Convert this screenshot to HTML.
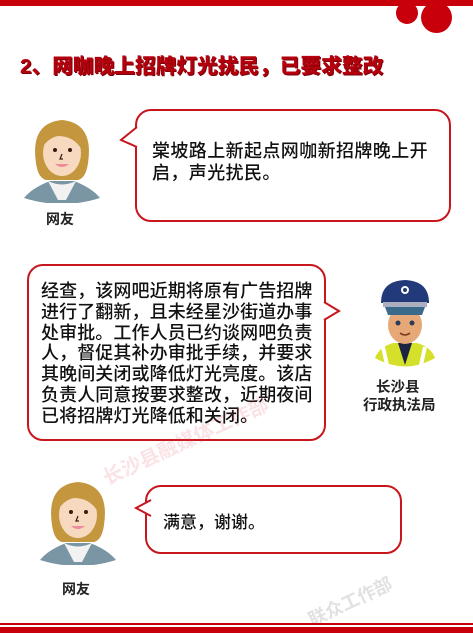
<!DOCTYPE html>
<html><head><meta charset="utf-8"><style>
*{margin:0;padding:0;box-sizing:border-box}
body{width:473px;height:633px;background:#fff;position:relative;overflow:hidden;font-family:"Liberation Sans","Noto Sans CJK SC",sans-serif;color:#111}
.a{position:absolute}
.bub{position:absolute;border:2px solid #c8161d;border-radius:16px;background:#fff}
.t{position:absolute;font-size:18px;white-space:nowrap;font-weight:500}
.lab{position:absolute;font-size:14px;font-weight:bold;color:#222;white-space:nowrap;text-align:center}
</style></head><body>
<div class="a" style="left:0;top:0;width:473px;height:6px;background:#c8000b"></div>
<div class="a" style="left:396px;top:2px;width:22px;height:22px;border-radius:50%;background:#c8000b"></div>
<div class="a" style="left:421px;top:2px;width:31px;height:31px;border-radius:50%;background:#c8000b"></div>
<div class="a" style="left:20px;top:49px;font-size:20.7px;font-weight:900;color:#b3000c;white-space:nowrap;text-shadow:1px 1px 0 #7a0008">2、网咖晚上招牌灯光扰民，已要求整改</div>

<!-- woman 1 -->
<svg class="a" style="left:22px;top:108px" width="80" height="95" viewBox="0 0 80 95">
<path d="M14 55 Q8 15 40 12 Q72 15 66 55 Q64 70 56 72 L24 72 Q16 70 14 55Z" fill="#c4963e"/>
<ellipse cx="40" cy="45" rx="19" ry="23" fill="#f6d9be"/>
<path d="M20 40 Q22 18 44 20 Q58 22 60 42 Q52 28 36 28 Q26 30 20 40Z" fill="#c4963e"/>
<circle cx="33" cy="42" r="2" fill="#3a1a10"/><circle cx="48" cy="42" r="2" fill="#3a1a10"/>
<path d="M40 46 L38 51 L41 51" stroke="#3a1a10" stroke-width="1.2" fill="none"/>
<path d="M33 56 Q40 62 47 56 Z" fill="#f08a9a"/>
<path d="M2 90 Q10 80 28 73 L52 73 Q70 80 78 90 Q40 102 2 90Z" fill="#7a96a4"/>
<path d="M26 73 L36 92 L44 92 L54 73 Q40 80 26 73Z" fill="#f2f2f2"/>
</svg>
<div class="lab" style="left:46px;top:209px">网友</div>

<div class="bub" style="left:135px;top:109px;width:316px;height:113px"></div>
<svg class="a" style="left:119px;top:125px" width="20" height="30"><path d="M18 2 L2 15 L18 22" fill="#fff" stroke="#c8161d" stroke-width="2"/></svg>
<div class="t" style="left:152px;top:140px;line-height:22px;letter-spacing:0.4px"> 棠坡路上新起点网咖新招牌晚上开<br>启，声光扰民。</div>

<!-- bubble 2 -->
<div class="bub" style="left:27px;top:264px;width:299px;height:177px"></div>
<svg class="a" style="left:322px;top:300px" width="20" height="30"><path d="M2 2 L17 11 L2 20" fill="#fff" stroke="#c8161d" stroke-width="2"/></svg>
<div class="t" style="left:41px;top:281px;line-height:20.8px;letter-spacing:0.1px">经查，该网吧近期将原有广告招牌<br>进行了翻新，且未经星沙街道办事<br>处审批。工作人员已约谈网吧负责<br>人，督促其补办审批手续，并要求<br>其晚间关闭或降低灯光亮度。该店<br>负责人同意按要求整改，近期夜间<br>已将招牌灯光降低和关闭。</div>

<!-- police -->
<svg class="a" style="left:365px;top:275px" width="80" height="95" viewBox="0 0 80 95">
<path d="M10 83 Q14 72 28 68 L52 68 Q66 72 70 83 Q40 100 10 83Z" fill="#d5e02a"/>
<path d="M18 72 L22 90 M60 72 L56 90" stroke="#fff" stroke-width="4"/>
<path d="M33 68 L40 90 L47 68Z" fill="#1c2442"/>
<ellipse cx="40" cy="50" rx="17" ry="19" fill="#e6a877"/>
<circle cx="33" cy="48" r="2.5" fill="#2a3a5a"/><circle cx="47" cy="48" r="2.5" fill="#2a3a5a"/>
<path d="M35 58 Q40 62 45 58" stroke="#7a3a20" stroke-width="1.5" fill="none"/>
<path d="M16 28 Q16 6 40 5 Q64 6 64 28 Z" fill="#233a7a"/>
<rect x="18" y="27" width="44" height="5" fill="#aab0c0"/>
<path d="M20 32 L60 32 L57 40 L23 40Z" fill="#3a6a8a"/>
<circle cx="40" cy="15" r="4" fill="#fff"/><circle cx="40" cy="15" r="2" fill="#233a7a"/>
</svg>
<div class="lab" style="left:376px;top:376px;font-size:14.5px">长沙县</div>
<div class="lab" style="left:363px;top:394px;font-size:14.5px">行政执法局</div>

<!-- watermark -->
<div class="a" style="left:95px;top:425px;font-size:20px;font-weight:bold;color:rgba(220,60,80,0.15);transform:rotate(-25deg);white-space:nowrap">长沙县融媒体工作部</div>
<div class="a" style="left:305px;top:588px;font-size:18px;font-weight:bold;color:rgba(120,120,120,0.22);transform:rotate(-25deg);white-space:nowrap">联众工作部</div>

<!-- woman 2 -->
<svg class="a" style="left:38px;top:470px" width="80" height="95" viewBox="0 0 80 95">
<path d="M14 55 Q8 15 40 12 Q72 15 66 55 Q64 70 56 72 L24 72 Q16 70 14 55Z" fill="#c4963e"/>
<ellipse cx="40" cy="45" rx="19" ry="23" fill="#f6d9be"/>
<path d="M20 40 Q22 18 44 20 Q58 22 60 42 Q52 28 36 28 Q26 30 20 40Z" fill="#c4963e"/>
<circle cx="33" cy="42" r="2" fill="#3a1a10"/><circle cx="48" cy="42" r="2" fill="#3a1a10"/>
<path d="M40 46 L38 51 L41 51" stroke="#3a1a10" stroke-width="1.2" fill="none"/>
<path d="M33 56 Q40 62 47 56 Z" fill="#f08a9a"/>
<path d="M2 90 Q10 80 28 73 L52 73 Q70 80 78 90 Q40 102 2 90Z" fill="#7a96a4"/>
<path d="M26 73 L36 92 L44 92 L54 73 Q40 80 26 73Z" fill="#f2f2f2"/>
</svg>
<div class="lab" style="left:62px;top:579px">网友</div>

<div class="bub" style="left:145px;top:485px;width:257px;height:69px"></div>
<svg class="a" style="left:133px;top:498px" width="20" height="30"><path d="M18 2 L3 10 L18 18" fill="#fff" stroke="#c8161d" stroke-width="2"/></svg>
<div class="t" style="left:163px;top:508px;font-size:17px">满意，谢谢。</div>

<div class="a" style="left:0;top:623px;width:473px;height:2px;background:#c8000b"></div>
<div class="a" style="left:0;top:627px;width:473px;height:6px;background:#c8000b"></div>
</body></html>
